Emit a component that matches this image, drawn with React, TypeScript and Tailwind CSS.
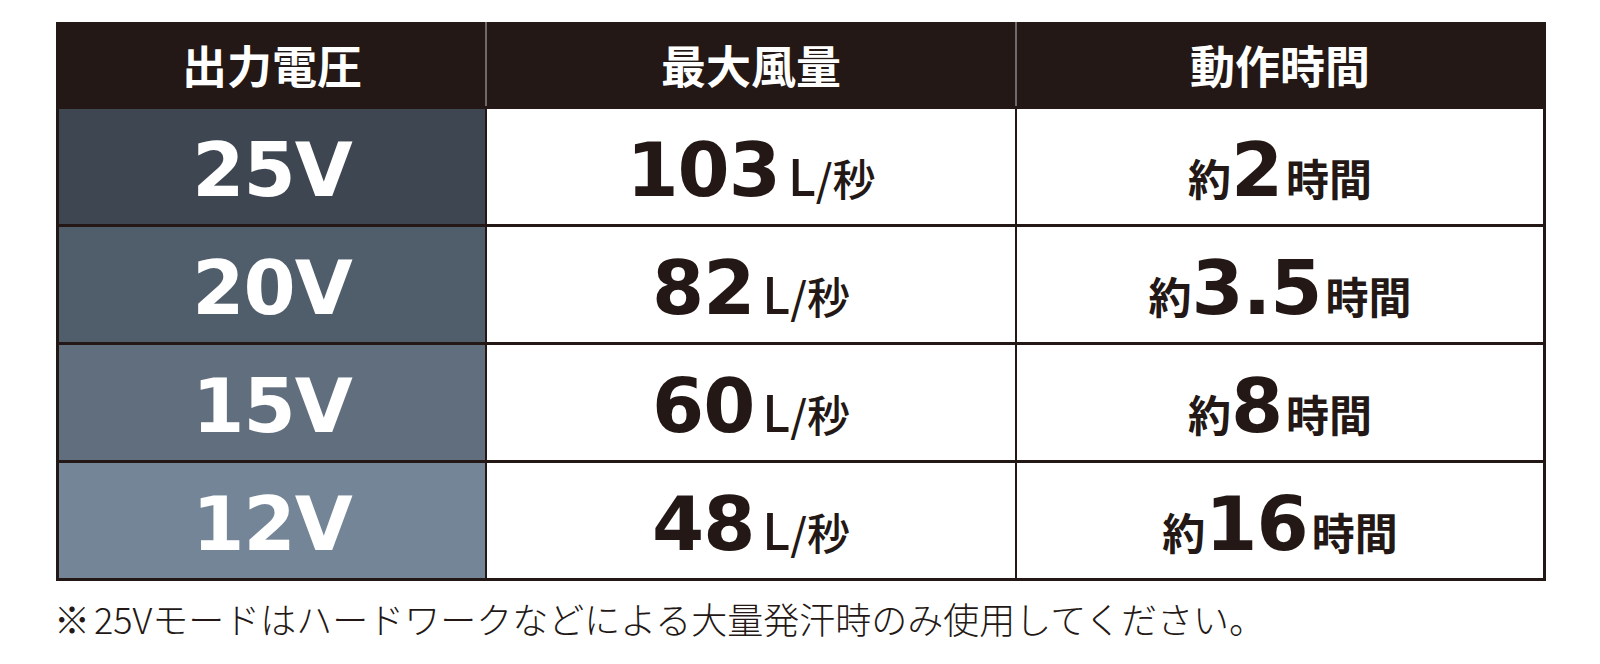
import React from "react";

const rows = [
  { v: "25V", bg: "bg-[#3e4652]", air: "103", time: "2" },
  { v: "20V", bg: "bg-[#505d6b]", air: "82", time: "3.5" },
  { v: "15V", bg: "bg-[#606e7d]", air: "60", time: "8" },
  { v: "12V", bg: "bg-[#738596]", air: "48", time: "16" },
];

const cjk = "font-['Noto_Sans_CJK_JP',sans-serif]";
const num = "font-['DejaVu_Sans',sans-serif] font-bold text-[75px] leading-none tracking-[-1px]";

export default function App() {
  return (
    <div className="w-[1600px] h-[664px] bg-white overflow-hidden">
      <div className="ml-[56px] mt-[22px] w-[1490px] bg-[#231815] grid grid-cols-[426px_528px_1fr] grid-rows-[84px_repeat(4,115px)] gap-x-[2px] gap-y-[3px] px-[3px] pb-[3px]">
        <div className={`flex items-center justify-center text-white font-bold text-[45px] leading-none ${cjk}`}>
          出力電圧
        </div>
        <div className={`-ml-[2px] border-l-2 border-[#6f6a69] flex items-center justify-center text-white font-bold text-[45px] leading-none ${cjk}`}>
          最大風量
        </div>
        <div className={`-ml-[2px] border-l-2 border-[#6f6a69] flex items-center justify-center text-white font-bold text-[45px] leading-none ${cjk}`}>
          動作時間
        </div>
        {rows.map((r) => (
          <React.Fragment key={r.v}>
            <div className={`${r.bg} flex items-center justify-center pt-2`}>
              <span className={`${num} text-white`}>{r.v}</span>
            </div>
            <div className="bg-white flex items-center justify-center pt-2">
              <div className="flex items-baseline text-[#231815]">
                <span className={num}>{r.air}</span>
                <span className={`ml-2 text-[50px] font-medium leading-none ${cjk}`}>L</span>
                <span className={`text-[43px] font-medium leading-none ${cjk}`}>/秒</span>
              </div>
            </div>
            <div className="bg-white flex items-center justify-center pt-2">
              <div className="flex items-baseline text-[#231815]">
                <span className={`text-[43px] font-bold leading-none ${cjk}`}>約</span>
                <span className={num}>{r.time}</span>
                <span className={`ml-1 text-[43px] font-bold leading-none ${cjk}`}>時間</span>
              </div>
            </div>
          </React.Fragment>
        ))}
      </div>
      <p className={`ml-[54px] mt-[19px] text-[36px] font-light leading-none text-[#231815] ${cjk}`}>
        ※<span className="ml-[4px]">25V</span>モードはハードワークなどによる大量発汗時のみ使用してください。
      </p>
    </div>
  );
}
